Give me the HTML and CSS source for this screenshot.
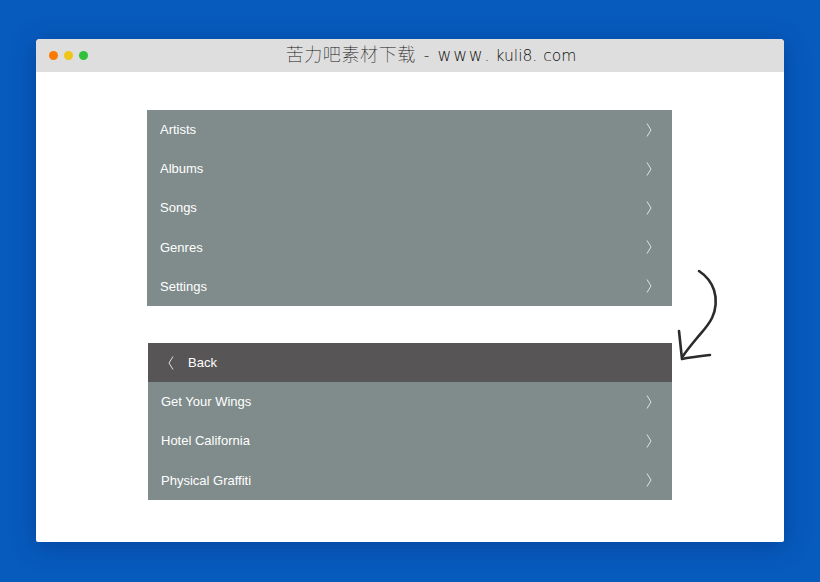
FILE: index.html
```html
<!DOCTYPE html>
<html lang="zh">
<head>
<meta charset="utf-8">
<title>Menu</title>
<link rel="stylesheet" href="styles.css">
</head>
<body>
<div class="window">
  <header class="titlebar">
    <div class="dots"><span class="dot dot-orange"></span><span class="dot dot-yellow"></span><span class="dot dot-green"></span></div>
    <div class="title"><span class="cjk">苦力吧素材下载</span><span class="latin">-</span><span class="latin"><span class="www">www</span><span class="sep">.</span>kuli8<span class="sep">.</span>com</span></div>
  </header>
  <main class="content">
    <ul class="menu menu-first">
      <li class="row"><span>Artists</span><svg class="chev" viewBox="0 0 6 14"><path d="M1 .5 L5 7 L1 13.5"/></svg></li>
      <li class="row"><span>Albums</span><svg class="chev" viewBox="0 0 6 14"><path d="M1 .5 L5 7 L1 13.5"/></svg></li>
      <li class="row"><span>Songs</span><svg class="chev" viewBox="0 0 6 14"><path d="M1 .5 L5 7 L1 13.5"/></svg></li>
      <li class="row"><span>Genres</span><svg class="chev" viewBox="0 0 6 14"><path d="M1 .5 L5 7 L1 13.5"/></svg></li>
      <li class="row"><span>Settings</span><svg class="chev" viewBox="0 0 6 14"><path d="M1 .5 L5 7 L1 13.5"/></svg></li>
    </ul>
    <ul class="menu menu-second">
      <li class="row row-back"><svg class="chev" viewBox="0 0 6 14"><path d="M5 .5 L1 7 L5 13.5"/></svg><span>Back</span></li>
      <li class="row"><span>Get Your Wings</span><svg class="chev" viewBox="0 0 6 14"><path d="M1 .5 L5 7 L1 13.5"/></svg></li>
      <li class="row"><span>Hotel California</span><svg class="chev" viewBox="0 0 6 14"><path d="M1 .5 L5 7 L1 13.5"/></svg></li>
      <li class="row"><span>Physical Graffiti</span><svg class="chev" viewBox="0 0 6 14"><path d="M1 .5 L5 7 L1 13.5"/></svg></li>
    </ul>
    <svg class="arrow" viewBox="0 0 50 100"><path d="M24 6 C30 10 36 16 39 25 C42 34 41 45 37 53 C33 61 27 67 22 73 C17 79 12 85 8 91"/><path d="M4 66 C5 76 6 85 7 94 C16 92 26 91 35 90"/></svg>
  </main>
</div>
</body>
</html>
```
FILE: styles.css
```css
* { box-sizing: border-box; }
html, body { margin: 0; height: 100%; }
body {
  width: 820px;
  height: 582px;
  overflow: hidden;
  padding: 39px 36px 40px;
  background: #075bbd;
  font-family: "Liberation Sans", Arial, sans-serif;
}
.window {
  height: 503px;
  background: #fff;
  border-radius: 4px 4px 2px 2px;
  overflow: hidden;
  box-shadow: 0 4px 24px rgba(0, 40, 120, .45);
  position: relative;
}
.titlebar {
  height: 33px;
  background: #dedede;
  display: flex;
  align-items: center;
  justify-content: center;
  padding-bottom: 5px;
  position: relative;
}
.dots {
  position: absolute;
  left: 12.5px;
  top: 12px;
  display: flex;
  gap: 6px;
}
.dot { width: 9px; height: 9px; border-radius: 50%; }
.dot-orange { background: #fb7a06; }
.dot-yellow { background: #eec518; }
.dot-green { background: #2fc139; }
.title {
  display: flex;
  align-items: baseline;
  gap: 8px;
  margin-left: 42px;
  color: #111;
  white-space: nowrap;
}
.cjk {
  font-family: "Noto Sans CJK SC", sans-serif;
  font-weight: 100;
  font-size: 18px;
  letter-spacing: .6px;
}
.latin {
  font-family: "DejaVu Sans", sans-serif;
  font-weight: 200;
  font-size: 15.5px;
}
.www { font-size: 17px; letter-spacing: 1.8px; }
.sep { letter-spacing: 6px; }
.content {
  padding-top: 38px;
  position: relative;
}
.menu {
  list-style: none;
  margin: 0;
  padding: 0;
  background: #7f8c8b;
  color: #fff;
  font-size: 13px;
}
.menu-first { margin-left: 111px; width: 525px; }
.menu-second { margin: 37px 0 0 112px; width: 524px; }
.row {
  height: 39.2px;
  display: flex;
  align-items: center;
  justify-content: space-between;
  padding: 0 20px 0 13px;
}
.row-back {
  background: #575555;
  justify-content: flex-start;
  gap: 14px;
  padding-left: 20px;
}
.chev {
  width: 6px;
  height: 14px;
  fill: none;
  stroke: #dfe3e2;
  stroke-width: 1;
}
.arrow {
  position: absolute;
  left: 639px;
  top: 193px;
  width: 50px;
  height: 100px;
  fill: none;
  stroke: #2b2b2b;
  stroke-width: 2.6;
  stroke-linecap: round;
  stroke-linejoin: round;
}
```
